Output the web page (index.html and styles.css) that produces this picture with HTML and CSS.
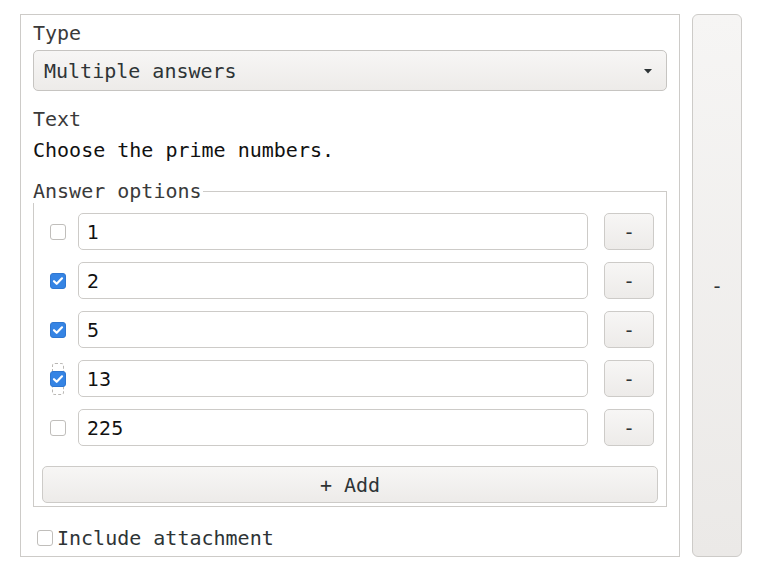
FILE: index.html
```html
<!DOCTYPE html>
<html>
<head>
<meta charset="utf-8">
<link rel="stylesheet" href="styles.css">
</head>
<body>
<div class="page">
  <div class="panel">
    <div class="label">Type</div>
    <div class="select">
      <span class="select-text">Multiple answers</span>
      <svg class="arrow" width="10" height="6" viewBox="0 0 10 6"><path d="M1 1h8L5 5.5z" fill="#2e3436"/></svg>
    </div>
    <div class="label label-text">Text</div>
    <div class="body-text">Choose the prime numbers.</div>
    <fieldset class="options">
      <legend class="legend">Answer options</legend>
      <div class="rows">
        <div class="row">
          <span class="check"></span>
          <div class="field">1</div>
          <div class="btn small">-</div>
        </div>
        <div class="row">
          <span class="check on"><svg width="12" height="10" viewBox="0 0 12 10"><path d="M2 5.2l2.7 2.6L10 2.3" fill="none" stroke="#fff" stroke-width="2.2" stroke-linecap="round" stroke-linejoin="round"/></svg></span>
          <div class="field">2</div>
          <div class="btn small">-</div>
        </div>
        <div class="row">
          <span class="check on"><svg width="12" height="10" viewBox="0 0 12 10"><path d="M2 5.2l2.7 2.6L10 2.3" fill="none" stroke="#fff" stroke-width="2.2" stroke-linecap="round" stroke-linejoin="round"/></svg></span>
          <div class="field">5</div>
          <div class="btn small">-</div>
        </div>
        <div class="row">
          <span class="check-wrap"><span class="focus"></span><span class="check on"><svg width="12" height="10" viewBox="0 0 12 10"><path d="M2 5.2l2.7 2.6L10 2.3" fill="none" stroke="#fff" stroke-width="2.2" stroke-linecap="round" stroke-linejoin="round"/></svg></span></span>
          <div class="field">13</div>
          <div class="btn small">-</div>
        </div>
        <div class="row">
          <span class="check"></span>
          <div class="field">225</div>
          <div class="btn small">-</div>
        </div>
      </div>
      <div class="btn add">+ Add</div>
    </fieldset>
    <div class="attach">
      <span class="check"></span>
      <span class="attach-text">Include attachment</span>
    </div>
  </div>
  <div class="btn side">-</div>
</div>
</body>
</html>
```

FILE: styles.css
```css
html, body {
  margin: 0;
  padding: 0;
  background: #ffffff;
}

.page {
  display: flex;
  gap: 12px;
  padding: 14px 18px 12px 20px;
  height: 569px;
  box-sizing: border-box;
  font-family: "DejaVu Sans Mono", monospace;
  font-size: 20px;
  color: #2e3436;
}

.panel {
  width: 660px;
  height: 543px;
  box-sizing: border-box;
  border: 1px solid #cdcbc8;
  padding: 6px 12px 0 12px;
  display: flex;
  flex-direction: column;
}

.label {
  line-height: 24px;
  color: #3a3a3a;
}

.select {
  margin-top: 5px;
  height: 41px;
  box-sizing: border-box;
  border: 1px solid #c6c4c1;
  border-radius: 5px;
  background: linear-gradient(#f7f6f5, #edebe9);
  display: flex;
  align-items: center;
  justify-content: space-between;
  padding: 0 13px 0 10px;
  color: #2e3436;
}

.select-text {
  line-height: 24px;
}

.label-text {
  margin-top: 16px;
}

.body-text {
  margin-top: 7px;
  line-height: 24px;
  color: #111;
}

.options {
  margin: 17px 0 0 0;
  padding: 10px 8px 3px 8px;
  border: 1px solid #cdcbc8;
  min-width: 0;
}

.legend {
  padding: 0 1px 0 0;
  margin-left: -9px;
  line-height: 24px;
  background: #ffffff;
  color: #3a3a3a;
}

.rows {
  display: flex;
  flex-direction: column;
  gap: 12px;
}

.row {
  display: flex;
  align-items: center;
  padding: 0 4px 0 8px;
  height: 37px;
}

.check {
  width: 16px;
  height: 16px;
  box-sizing: border-box;
  border: 1px solid #c0bebb;
  border-radius: 3px;
  background: #ffffff;
  display: flex;
  align-items: center;
  justify-content: center;
  flex: none;
}

.check.on {
  background: #3584e4;
  border-color: #2f77d1;
}

.check-wrap {
  position: relative;
  width: 16px;
  height: 16px;
  flex: none;
}

.focus {
  position: absolute;
  left: 2px;
  top: -8px;
  width: 12px;
  height: 32px;
  box-sizing: border-box;
  border: 1px dashed #b9b7b4;
  border-radius: 3px;
}

.check-wrap .check {
  position: relative;
}

.field {
  flex: 1;
  margin: 0 16px 0 12px;
  height: 37px;
  box-sizing: border-box;
  border: 1px solid #cdcbc8;
  border-radius: 5px;
  background: #ffffff;
  display: flex;
  align-items: center;
  padding-left: 8px;
  font-family: "DejaVu Sans", sans-serif;
  font-size: 19px;
  color: #111;
}

.btn {
  box-sizing: border-box;
  border: 1px solid #cdcbc8;
  border-radius: 5px;
  background: linear-gradient(#f7f6f5, #edebe9);
  display: flex;
  align-items: center;
  justify-content: center;
  color: #2e3436;
  line-height: 24px;
}

.small {
  width: 50px;
  height: 37px;
  flex: none;
}

.add {
  margin-top: 20px;
  height: 37px;
}

.attach {
  margin-top: 19px;
  display: flex;
  align-items: center;
  gap: 4px;
  padding-left: 4px;
}

.attach-text {
  line-height: 24px;
  color: #2e3436;
}

.side {
  width: 50px;
  height: 543px;
  border-radius: 6px;
  background: linear-gradient(#f6f5f4, #ebe9e7);
}
```
